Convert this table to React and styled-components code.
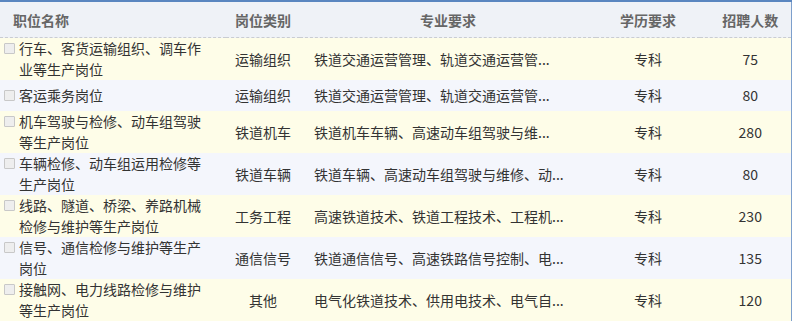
import React from 'react';
import styled, { createGlobalStyle } from 'styled-components';

const GlobalStyle = createGlobalStyle`
  body {
    margin: 0;
    background: #ffffff;
    font-family: "Noto Sans CJK SC", "Microsoft YaHei", sans-serif;
  }
`;

const jobs = [
  { name: '行车、客货运输组织、调车作业等生产岗位', type: '运输组织', major: '铁道交通运营管理、轨道交通运营管...', edu: '专科', count: 75 },
  { name: '客运乘务岗位', type: '运输组织', major: '铁道交通运营管理、轨道交通运营管...', edu: '专科', count: 80 },
  { name: '机车驾驶与检修、动车组驾驶等生产岗位', type: '铁道机车', major: '铁道机车车辆、高速动车组驾驶与维...', edu: '专科', count: 280 },
  { name: '车辆检修、动车组运用检修等生产岗位', type: '铁道车辆', major: '铁道车辆、高速动车组驾驶与维修、动...', edu: '专科', count: 80 },
  { name: '线路、隧道、桥梁、养路机械检修与维护等生产岗位', type: '工务工程', major: '高速铁道技术、铁道工程技术、工程机...', edu: '专科', count: 230 },
  { name: '信号、通信检修与维护等生产岗位', type: '通信信号', major: '铁道通信信号、高速铁路信号控制、电...', edu: '专科', count: 135 },
  { name: '接触网、电力线路检修与维护等生产岗位', type: '其他', major: '电气化铁道技术、供用电技术、电气自...', edu: '专科', count: 120 },
];

function App() {
  return (
    <>
      <GlobalStyle />
      <Table>
        <colgroup>
          <col style={{ width: 226 }} />
          <col style={{ width: 74 }} />
          <col style={{ width: 296 }} />
          <col style={{ width: 104 }} />
          <col style={{ width: 91 }} />
        </colgroup>
        <thead>
          <tr>
            <Th align="left" indent={13}>职位名称</Th>
            <Th>岗位类别</Th>
            <Th>专业要求</Th>
            <Th>学历要求</Th>
            <Th indent={14}>招聘人数</Th>
          </tr>
        </thead>
        <tbody>
          {jobs.map((job, i) => (
            <Row key={i} odd={i % 2 === 0}>
              <Td align="left">
                <NameWrap>
                  <Check />
                  <NameText>{job.name}</NameText>
                </NameWrap>
              </Td>
              <Td>{job.type}</Td>
              <Td align="left" indent={14}>{job.major}</Td>
              <Td>{job.edu}</Td>
              <Td indent={14}>{job.count}</Td>
            </Row>
          ))}
        </tbody>
      </Table>
    </>
  );
}

export default App;

// **************Styling***************

const Table = styled.table`
  width: 791px;
  table-layout: fixed;
  border-collapse: collapse;
  border-top: 2px solid #5a86c0;
  border-right: 1px solid #7d9fcc;
  font-size: 14px;
  color: #333;
`;

const Th = styled.th`
  height: 35px;
  padding: 0 4px 0 ${props => props.indent ? props.indent + 'px' : '4px'};
  background: #eff2f7;
  border-bottom: 1px dashed #c9ccd2;
  color: #666;
  font-weight: 600;
  font-size: 14px;
  text-align: ${props => props.align || 'center'};
`;

const Row = styled.tr`
  background: ${props => props.odd ? '#fefde8' : '#f4f6fc'};
`;

const Td = styled.td`
  height: 31px;
  padding: 0 4px 0 ${props => props.indent ? props.indent + 'px' : '4px'};
  line-height: 21px;
  text-align: ${props => props.align || 'center'};
  vertical-align: middle;
  white-space: nowrap;
`;

const NameWrap = styled.div`
  display: flex;
  align-items: flex-start;
  gap: 4px;
  white-space: normal;
`;

const NameText = styled.span`
  width: 190px;
`;

const Check = styled.span`
  flex: none;
  width: 9px;
  height: 9px;
  margin-top: 5px;
  border: 1px solid #c8c8c8;
  background: #eeeeee;
  border-radius: 1px;
`;
